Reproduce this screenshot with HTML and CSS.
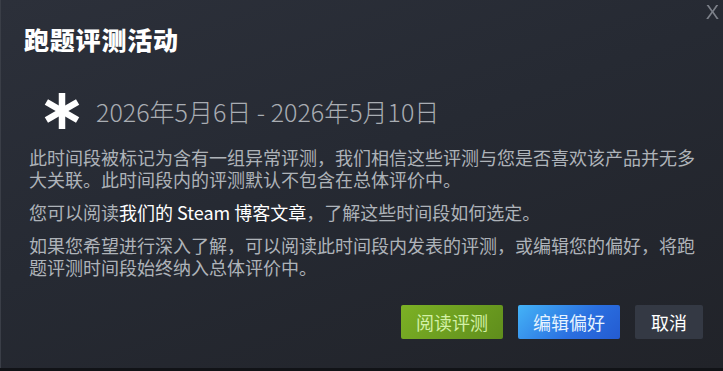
FILE: index.html
```html
<!DOCTYPE html>
<html lang="zh-CN">
<head>
<meta charset="utf-8">
<link rel="stylesheet" href="styles.css">
</head>
<body>
<div class="dialog">
  <div class="close">X</div>
  <h1 class="title">跑题评测活动</h1>
  <div class="range">
    <svg class="star" width="40" height="40" viewBox="0 0 40 40">
      <g stroke="#ffffff" stroke-width="6.5" stroke-linecap="butt">
        <line x1="20" y1="2" x2="20" y2="38"/>
        <line x1="4.4" y1="11" x2="35.6" y2="29"/>
        <line x1="4.4" y1="29" x2="35.6" y2="11"/>
      </g>
    </svg>
    <span class="dates">2026年5月6日 - 2026年5月10日</span>
  </div>
  <div class="body">
    <p>此时间段被标记为含有一组异常评测，我们相信这些评测与您是否喜欢该产品并无多大关联。此时间段内的评测默认不包含在总体评价中。</p>
    <p>您可以阅读<a class="link">我们的 Steam 博客文章</a>，了解这些时间段如何选定。</p>
    <p>如果您希望进行深入了解，可以阅读此时间段内发表的评测，或编辑您的偏好，将跑题评测时间段始终纳入总体评价中。</p>
  </div>
  <div class="actions">
    <button class="btn green">阅读评测</button>
    <button class="btn blue">编辑偏好</button>
    <button class="btn grey">取消</button>
  </div>
</div>
<div class="under"></div>
</body>
</html>
```
FILE: styles.css
```css
html, body {
  margin: 0;
  padding: 0;
  background: #15171b;
  overflow: hidden;
}
body {
  width: 723px;
  height: 371px;
  font-family: "Noto Sans CJK SC", "Noto Sans", sans-serif;
}
.dialog {
  position: relative;
  box-sizing: border-box;
  width: 723px;
  height: 368px;
  background: linear-gradient(160deg, #2c303a 0%, #262a33 45%, #212329 100%);
  border-left: 1px solid #3a3e47;
  padding: 22px 24px 0 23px;
  display: flex;
  flex-direction: column;
}
.close {
  position: absolute;
  top: 1px;
  right: 4px;
  font-family: "Liberation Sans", sans-serif;
  font-size: 20px;
  color: #7c8089;
  filter: blur(0.4px);
}
.title {
  margin: 0;
  font-size: 25px;
  font-weight: 900;
  line-height: 34px;
  color: #ffffff;
  letter-spacing: 0.8px;
}
.range {
  display: flex;
  align-items: center;
  margin-top: 35px;
  margin-left: 18px;
  height: 40px;
}
.star {
  display: block;
  margin-right: 14px;
}
.dates {
  font-size: 25px;
  font-weight: 300;
  color: #a9adb3;
  line-height: 30px;
}
.body {
  margin-top: 15px;
  padding-left: 5px;
  color: #aeb3b9;
  font-size: 18px;
  line-height: 22px;
}
.body p {
  margin: 0 0 11px 0;
}
.link {
  color: #ffffff;
}
.actions {
  display: flex;
  justify-content: flex-end;
  gap: 15px;
  margin-top: 16px;
}
.btn {
  height: 34px;
  border: none;
  border-radius: 2px;
  font-family: "Noto Sans CJK SC", sans-serif;
  font-size: 18px;
  padding: 0 15px;
  cursor: pointer;
}
.green {
  background: linear-gradient(135deg, #7cb125 0%, #5f8d1c 100%);
  color: #d3f0a6;
}
.blue {
  background: linear-gradient(135deg, #44b3f7 0%, #2a6fe0 60%, #245bd1 100%);
  color: #e6f3ff;
}
.grey {
  background: #343944;
  color: #ffffff;
  padding: 0 16px;
  margin-right: -4px;
}
.under {
  height: 3px;
  background: #111317;
}
```
